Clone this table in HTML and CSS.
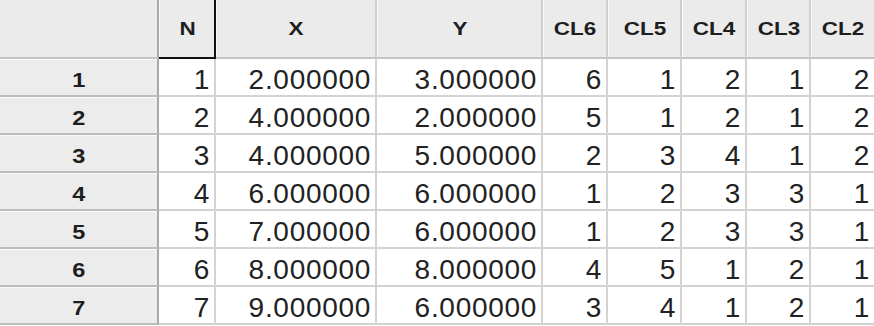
FILE: index.html
```html
<!DOCTYPE html>
<html>
<head>
<meta charset="utf-8">
<link rel="stylesheet" href="styles.css">
</head>
<body>
<div class="viewport">
<table class="grid">
  <colgroup>
    <col class="c-rh"><col class="c-n"><col class="c-x"><col class="c-y"><col class="c-6"><col class="c-5"><col class="c-4"><col class="c-3"><col class="c-2">
  </colgroup>
  <thead>
    <tr>
      <th class="corner"></th>
      <th class="selected"><span class="lbl">N</span></th>
      <th><span class="lbl">X</span></th>
      <th><span class="lbl">Y</span></th>
      <th><span class="lbl">CL6</span></th>
      <th><span class="lbl">CL5</span></th>
      <th><span class="lbl">CL4</span></th>
      <th><span class="lbl">CL3</span></th>
      <th><span class="lbl">CL2</span></th>
    </tr>
  </thead>
  <tbody>
    <tr><th class="rh"><span class="num">1</span></th><td>1</td><td>2.000000</td><td>3.000000</td><td>6</td><td>1</td><td>2</td><td>1</td><td>2</td></tr>
    <tr><th class="rh"><span class="num">2</span></th><td>2</td><td>4.000000</td><td>2.000000</td><td>5</td><td>1</td><td>2</td><td>1</td><td>2</td></tr>
    <tr><th class="rh"><span class="num">3</span></th><td>3</td><td>4.000000</td><td>5.000000</td><td>2</td><td>3</td><td>4</td><td>1</td><td>2</td></tr>
    <tr><th class="rh"><span class="num">4</span></th><td>4</td><td>6.000000</td><td>6.000000</td><td>1</td><td>2</td><td>3</td><td>3</td><td>1</td></tr>
    <tr><th class="rh"><span class="num">5</span></th><td>5</td><td>7.000000</td><td>6.000000</td><td>1</td><td>2</td><td>3</td><td>3</td><td>1</td></tr>
    <tr><th class="rh"><span class="num">6</span></th><td>6</td><td>8.000000</td><td>8.000000</td><td>4</td><td>5</td><td>1</td><td>2</td><td>1</td></tr>
    <tr><th class="rh"><span class="num">7</span></th><td>7</td><td>9.000000</td><td>6.000000</td><td>3</td><td>4</td><td>1</td><td>2</td><td>1</td></tr>
  </tbody>
</table>
</div>
</body>
</html>
```

FILE: styles.css
```css
html, body {
  margin: 0;
  padding: 0;
  background: #ffffff;
  overflow: hidden;
}

.viewport {
  width: 874px;
  height: 326px;
  overflow: hidden;
}

.grid {
  border-collapse: separate;
  border-spacing: 0;
  table-layout: fixed;
  width: 876px;
  font-family: "Liberation Sans", Arial, sans-serif;
  color: #222222;
}

.c-rh { width: 159px; }
.c-n { width: 57px; }
.c-x { width: 161px; }
.c-y { width: 166px; }
.c-6 { width: 65px; }
.c-5 { width: 74px; }
.c-4 { width: 65px; }
.c-3 { width: 64px; }
.c-2 { width: 65px; }

.grid th,
.grid td {
  padding: 0;
  box-sizing: border-box;
  white-space: nowrap;
  overflow: hidden;
}

.grid thead th {
  height: 59px;
  background: #ebebeb;
  border-right: 2px solid #cfcfcf;
  border-bottom: 2px solid #c4c4c4;
  box-shadow: inset 1px 0 0 #fafafa;
  font-weight: bold;
  font-size: 18px;
  text-align: center;
  padding-left: 2px;
  padding-top: 2px;
  color: #1e1e1e;
}

.lbl {
  display: inline-block;
  transform: scaleX(1.25);
}

.num {
  display: inline-block;
  transform: scaleX(1.12);
}

.grid thead th.corner {
  border-right: 2px solid #a9a9a9;
  box-shadow: none;
}

.grid thead th.selected {
  border-right: 2px solid #111111;
  border-bottom: 2px solid #111111;
}

.grid tbody th.rh {
  height: 38px;
  background: #ececec;
  border-right: 2px solid #a9a9a9;
  border-bottom: 2px solid #bdbdbd;
  box-shadow: inset 0 1px 0 #fafafa;
  font-weight: bold;
  font-size: 21px;
  text-align: center;
  padding-top: 5px;
  color: #1e1e1e;
}

.grid tbody td {
  height: 38px;
  border-right: 2px solid #d3d3d3;
  border-bottom: 2px solid #d3d3d3;
  font-size: 28px;
  letter-spacing: 0.7px;
  text-align: right;
  padding-right: 4px;
  padding-top: 5px;
  line-height: 30px;
}
```
